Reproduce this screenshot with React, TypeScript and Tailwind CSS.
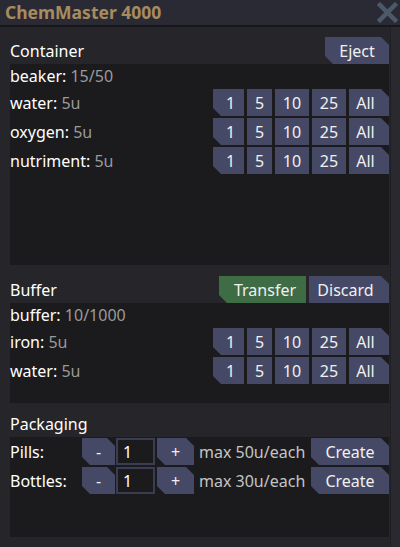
import React from "react";

type Cut = "both" | "bl" | "tr" | "none";

const cutClass: Record<Cut, string> = {
  both: "[clip-path:polygon(0_0,calc(100%-8px)_0,100%_8px,100%_100%,8px_100%,0_calc(100%-8px))]",
  bl: "[clip-path:polygon(0_0,100%_0,100%_100%,8px_100%,0_calc(100%-8px))]",
  tr: "[clip-path:polygon(0_0,calc(100%-8px)_0,100%_8px,100%_100%,0_100%)]",
  none: "",
};

function Btn({
  label,
  cut = "both",
  width,
  green = false,
  extra = "",
}: {
  label: string;
  cut?: Cut;
  width: string;
  green?: boolean;
  extra?: string;
}) {
  return (
    <button
      className={`h-[27px] ${width} flex items-center justify-center text-[16px] text-[#f0f0f0] leading-none ${
        green ? "bg-[#3e6c45]" : "bg-[#464966]"
      } ${cutClass[cut]} ${extra}`}
    >
      {label}
    </button>
  );
}

function Amounts() {
  return (
    <div className="flex gap-[3px]">
      <Btn label="1" cut="bl" width="w-[31px]" extra="pl-[4px]" />
      <Btn label="5" cut="none" width="w-[25px]" />
      <Btn label="10" cut="none" width="w-[34px]" />
      <Btn label="25" cut="none" width="w-[34px]" />
      <Btn label="All" cut="tr" width="w-[40px]" extra="pr-[7px]" />
    </div>
  );
}

function Reagent({ name, amount }: { name: string; amount: string }) {
  return (
    <div className="flex items-center justify-between h-[27px]">
      <span className="text-white">
        {name}: <span className="text-[#9a9a9a]">{amount}</span>
      </span>
      <Amounts />
    </div>
  );
}

function PackRow({ label, max }: { label: string; max: string }) {
  return (
    <div className="flex items-center h-[27px]">
      <span className="w-[72px] text-white">{label}</span>
      <Btn label="-" width="w-[33px]" />
      <div className="ml-[1px] w-[39px] h-[27px] border-2 border-[#3a3d52] bg-[#1b1b1e] flex items-center pl-[5px] text-white">
        1
      </div>
      <Btn label="+" width="w-[37px]" extra="ml-[2px]" />
      <span className="ml-[5px] text-[#c4c4c4]">{max}</span>
      <div className="flex-1" />
      <Btn label="Create" width="w-[78px]" />
    </div>
  );
}

export default function App() {
  return (
    <div
      className="w-[400px] h-[547px] flex flex-col bg-[#25252a] overflow-hidden text-[16px]"
      style={{ fontFamily: '"Noto Sans", "Open Sans", sans-serif' }}
    >
      <div className="h-[25px] bg-[#2a2a35] flex items-center justify-between pl-[5px] pr-[2px]">
        <span className="font-bold text-[#a88b5e] text-[17.5px] leading-none">ChemMaster 4000</span>
        <svg width="21" height="21" viewBox="0 0 21 21">
          <path d="M3 3 L18 18 M18 3 L3 18" stroke="#4b596a" strokeWidth="4.5" strokeLinecap="square" />
        </svg>
      </div>
      <div className="h-[2px] bg-[#17171b]" />

      <div className="flex-1 flex">
        <div className="flex-1 flex flex-col pl-[10px] pr-[1px] pt-[10px]">
          <div className="h-[27px] flex items-center justify-between">
            <span className="text-white">Container</span>
            <Btn label="Eject" width="w-[64px]" />
          </div>
          <div className="h-[201px] bg-[#1b1b1e] flex flex-col gap-[2px]">
            <div className="h-[23px] flex items-center text-white">
              beaker:&nbsp;<span className="text-[#9a9a9a]">15/50</span>
            </div>
            <Reagent name="water" amount="5u" />
            <Reagent name="oxygen" amount="5u" />
            <Reagent name="nutriment" amount="5u" />
          </div>

          <div className="mt-[11px] h-[27px] flex items-center justify-between">
            <span className="text-white">Buffer</span>
            <div className="flex gap-[3px]">
              <Btn label="Transfer" cut="bl" green width="w-[87px]" extra="pl-[5px]" />
              <Btn label="Discard" cut="tr" width="w-[80px]" extra="pr-[7px]" />
            </div>
          </div>
          <div className="h-[100px] bg-[#1b1b1e] flex flex-col gap-[2px]">
            <div className="h-[23px] flex items-center text-white">
              buffer:&nbsp;<span className="text-[#9a9a9a]">10/1000</span>
            </div>
            <Reagent name="iron" amount="5u" />
            <Reagent name="water" amount="5u" />
          </div>

          <div className="mt-[8px] h-[26px] flex items-center">
            <span className="text-white">Packaging</span>
          </div>
          <div className="h-[100px] bg-[#1b1b1e] flex flex-col gap-[2px] pt-[1px]">
            <PackRow label="Pills:" max="max 50u/each" />
            <PackRow label="Bottles:" max="max 30u/each" />
          </div>
        </div>
        <div className="w-[10px] border-l border-[#202024] bg-[#29292f]" />
      </div>
    </div>
  );
}
